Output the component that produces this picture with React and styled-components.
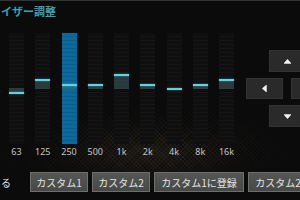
import React from 'react';
import styled, { createGlobalStyle } from 'styled-components';

const bands = [
    { label: '63', value: 4 },
    { label: '125', value: -9 },
    { label: '250', value: -4, active: true },
    { label: '500', value: -4 },
    { label: '1k', value: -14 },
    { label: '2k', value: -4 },
    { label: '4k', value: 0 },
    { label: '8k', value: -4 },
    { label: '16k', value: -9 },
];

const ZERO = 55;

const Knob = ({ value }) => {
    const line = ZERO + value;
    const top = Math.min(line, ZERO);
    const bottom = Math.max(line + 2, ZERO + 1);
    return (
        <>
            {value !== 0 && <KnobFill style={{ top, height: bottom - top }} />}
            <KnobLine style={{ top: line }} />
        </>
    );
};

const Arrow = ({ dir }) => {
    const rot = { up: 0, right: 90, down: 180, left: 270 }[dir];
    return (
        <svg width="9" height="9" viewBox="0 0 9 9" style={{ transform: `rotate(${rot}deg)` }}>
            <polygon points="4.5,2 8,6 1,6" fill="#f2f2f2" />
            <rect x="1" y="6" width="7" height="1" fill="#bdbdbd" />
        </svg>
    );
};

const App = () => {
    return (
        <>
            <GlobalStyle />
            <Page>
                <Title>イザー調整</Title>
                <Main>
                    <Eq>
                        {bands.map((b) => (
                            <Band key={b.label}>
                                <Bar active={b.active}>
                                    <Knob value={b.value} />
                                </Bar>
                                <BandLabel>{b.label}</BandLabel>
                            </Band>
                        ))}
                    </Eq>
                    <DPad>
                        <PadRow>
                            <PadButton h={22}><Arrow dir="up" /></PadButton>
                        </PadRow>
                        <PadRow gap={8}>
                            <PadButton h={21}><Arrow dir="left" /></PadButton>
                            <PadButton h={21}><Arrow dir="right" /></PadButton>
                        </PadRow>
                        <PadRow>
                            <PadButton h={22}><Arrow dir="down" /></PadButton>
                        </PadRow>
                    </DPad>
                </Main>
                <ButtonRow>
                    <BackButton>る</BackButton>
                    <Button w={58}>カスタム1</Button>
                    <Button w={58}>カスタム2</Button>
                    <Button w={90}>カスタム1に登録</Button>
                    <Button w={90}>カスタム2に登録</Button>
                </ButtonRow>
            </Page>
        </>
    );
};

export default App;

// Styled Components
const GlobalStyle = createGlobalStyle`
    html, body {
        margin: 0;
        padding: 0;
        background: #0b0b0b;
    }
`;

const Page = styled.div`
    position: relative;
    width: 300px;
    height: 200px;
    box-sizing: border-box;
    overflow: hidden;
    display: flex;
    flex-direction: column;
    border-top: 1px solid #343434;
    background:
        radial-gradient(ellipse 130px 40px at 150px 152px, rgba(70, 58, 40, 0.35), rgba(35, 30, 22, 0.12) 70%, transparent 100%),
        #0b0b0b;
    font-family: "Noto Sans CJK JP", "Noto Sans", sans-serif;

    &::before {
        content: '';
        position: absolute;
        inset: 0;
        pointer-events: none;
        background:
            repeating-linear-gradient(45deg, rgba(255, 255, 255, 0.035) 0 1px, transparent 1px 3px),
            repeating-linear-gradient(-45deg, rgba(0, 0, 0, 0.35) 0 1px, transparent 1px 3px);
        -webkit-mask-image: radial-gradient(ellipse 170px 50px at 150px 148px, #000 30%, transparent 100%);
        mask-image: radial-gradient(ellipse 170px 50px at 150px 148px, #000 30%, transparent 100%);
    }
`;

const Title = styled.div`
    position: relative;
    padding: 3px 0 0 1px;
    font-size: 11px;
    line-height: 14px;
    font-weight: 700;
    color: #3b9fb0;
`;

const Main = styled.div`
    position: relative;
    display: flex;
    align-items: flex-start;
    margin-top: 15px;
    padding-left: 9px;
`;

const Eq = styled.div`
    display: grid;
    grid-template-columns: repeat(9, 15px);
    column-gap: 11.25px;
`;

const Band = styled.div`
    display: flex;
    flex-direction: column;
    align-items: center;
`;

const Bar = styled.div`
    position: relative;
    width: 15px;
    height: 111px;
    background: ${({ active }) =>
        active
            ? 'repeating-linear-gradient(180deg, #0c699a 0 3px, #0a5f8d 3px 4px)'
            : 'repeating-linear-gradient(180deg, #0f0f0f 0 3px, #151515 3px 4px)'};
`;

const KnobFill = styled.div`
    position: absolute;
    left: 0;
    right: 0;
    background: rgba(70, 110, 112, 0.45);
`;

const KnobLine = styled.div`
    position: absolute;
    left: 0;
    right: 0;
    height: 2px;
    background: #5fd3e2;
    box-shadow: 0 0 2px rgba(95, 211, 226, 0.6);
`;

const BandLabel = styled.div`
    margin-top: 2px;
    font-family: "Noto Sans", sans-serif;
    font-size: 9px;
    line-height: 12px;
    color: #c4c4c4;
    white-space: nowrap;
`;

const DPad = styled.div`
    display: flex;
    flex-direction: column;
    align-items: center;
    gap: 6px;
    margin-top: 17px;
    margin-left: 12px;
    flex-shrink: 0;
`;

const PadRow = styled.div`
    display: flex;
    gap: ${({ gap }) => gap || 0}px;
`;

const PadButton = styled.div`
    width: 37px;
    height: ${({ h }) => h}px;
    box-sizing: border-box;
    display: flex;
    align-items: center;
    justify-content: center;
    background: #2a2a2a;
    border: 1px solid #333;
`;

const ButtonRow = styled.div`
    position: relative;
    display: flex;
    gap: 4px;
    margin-top: auto;
    margin-bottom: 8px;
`;

const Button = styled.div`
    flex-shrink: 0;
    width: ${({ w }) => w}px;
    height: 20px;
    box-sizing: border-box;
    display: flex;
    align-items: center;
    justify-content: center;
    background: linear-gradient(180deg, #555755, #474947);
    border: 1px solid #6e6e6e;
    color: #e4e4e4;
    font-size: 10px;
    white-space: nowrap;
`;

const BackButton = styled.div`
    flex-shrink: 0;
    width: 26px;
    height: 20px;
    display: flex;
    align-items: center;
    padding-left: 1px;
    box-sizing: border-box;
    color: #e4e4e4;
    font-size: 10px;
`;
